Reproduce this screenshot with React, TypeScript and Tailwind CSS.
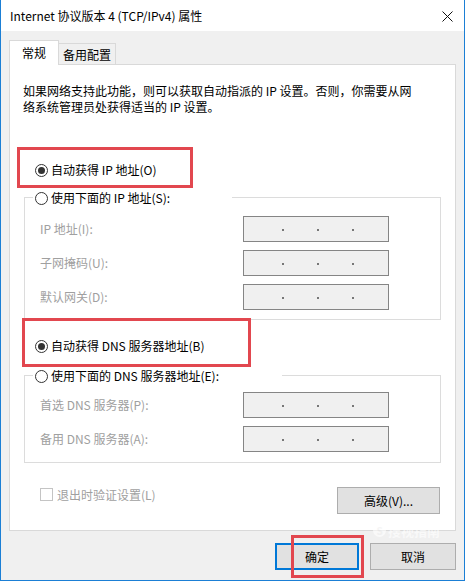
import type { ReactNode } from 'react';

const FONT = { fontFamily: '"Noto Sans CJK SC", "Noto Sans", sans-serif' };

function Radio({ checked }: { checked?: boolean }) {
  return (
    <span className="w-[13px] h-[13px] rounded-full border border-[#333] bg-white flex items-center justify-center shrink-0">
      {checked && <span className="w-[7px] h-[7px] rounded-full bg-[#333]" />}
    </span>
  );
}

function IpBox() {
  return (
    <div className="relative w-[146px] h-[26px] border border-[#858585] bg-[#f0f0f0]">
      <span className="absolute left-[38px] top-[12px] w-[2px] h-[2px] bg-[#777]" />
      <span className="absolute left-[73px] top-[12px] w-[2px] h-[2px] bg-[#777]" />
      <span className="absolute left-[108px] top-[12px] w-[2px] h-[2px] bg-[#777]" />
    </div>
  );
}

function Field({ label }: { label: string }) {
  return (
    <div className="grid grid-cols-[203px_146px] items-center">
      <span className="text-[12px] text-[#a0a0a0]">{label}</span>
      <IpBox />
    </div>
  );
}

function Group({
  legend,
  legendWidth,
  children,
}: {
  legend: string;
  legendWidth: string;
  children: ReactNode;
}) {
  return (
    <div className="ml-[14px] w-[417px] border border-[#dcdcdc]">
      <div className={`-mt-[8px] ml-[8px] h-[16px] bg-white flex items-center gap-[3px] pl-[2px] ${legendWidth}`}>
        <Radio />
        <span className="text-[12px] text-black leading-none">{legend}</span>
      </div>
      {children}
    </div>
  );
}

function RedBox({ className }: { className: string }) {
  return <div className={`absolute border-[3px] border-[#e2474f] pointer-events-none ${className}`} />;
}

export default function App() {
  return (
    <div
      style={FONT}
      className="relative w-[465px] h-[581px] bg-[#f0f0f0] border-x border-b border-[#1b7fd5] flex flex-col overflow-hidden"
    >
      {/* title bar */}
      <div className="h-[31px] bg-white flex items-center justify-between pl-[9px] pr-[11px] shrink-0">
        <span className="text-[12px] text-black">Internet 协议版本 4 (TCP/IPv4) 属性</span>
        <svg width="11" height="11" viewBox="0 0 11 11" className="mt-[1px]">
          <path d="M0.5 0.5 L10.5 10.5 M10.5 0.5 L0.5 10.5" stroke="#111" strokeWidth="1" />
        </svg>
      </div>

      <div className="pl-[8px] pr-[8px] flex flex-col">
        {/* tabs */}
        <div className="flex items-end pt-[9px] h-[33px]">
          <div className="w-[50px] h-[25px] bg-white border border-b-0 border-[#d9d9d9] flex justify-center pt-[3px] text-[12px] text-black relative z-10 -mb-[1px]">
            常规
          </div>
          <div className="w-[57px] h-[21px] bg-[#f0f0f0] border border-l-0 border-b-0 border-[#d9d9d9] flex justify-center pt-[2px] text-[12px] text-black">
            备用配置
          </div>
        </div>

        {/* panel */}
        <div className="relative h-[467px] w-[447px] bg-white border border-[#d9d9d9] flex flex-col">
          <p className="mt-[18px] ml-[13px] text-[12px] leading-[16px] text-black">
            如果网络支持此功能，则可以获取自动指派的 IP 设置。否则，你需要从网
            <br />
            络系统管理员处获得适当的 IP 设置。
          </p>

          <div className="mt-[47px] ml-[25px] h-[16px] flex items-center gap-[3px]">
            <Radio checked />
            <span className="text-[12px] text-black leading-none">自动获得 IP 地址(O)</span>
          </div>

          <div className="mt-[19px]">
            <Group legend="使用下面的 IP 地址(S):" legendWidth="w-[199px]">
              <div className="mt-[10px] mb-[9px] pl-[15px] flex flex-col gap-[8px]">
                <Field label="IP 地址(I):" />
                <Field label="子网掩码(U):" />
                <Field label="默认网关(D):" />
              </div>
            </Group>
          </div>

          <div className="mt-[18px] ml-[25px] h-[16px] flex items-center gap-[3px]">
            <Radio checked />
            <span className="text-[12px] text-black leading-none">自动获得 DNS 服务器地址(B)</span>
          </div>

          <div className="mt-[21px]">
            <Group legend="使用下面的 DNS 服务器地址(E):" legendWidth="w-[249px]">
              <div className="mt-[8px] mb-[10px] pl-[15px] flex flex-col gap-[8px]">
                <Field label="首选 DNS 服务器(P):" />
                <Field label="备用 DNS 服务器(A):" />
              </div>
            </Group>
          </div>

          <div className="mt-[24px] ml-[30px] mr-[15px] flex justify-between items-start">
            <div className="mt-[1px] flex items-center gap-[4px]">
              <span className="w-[13px] h-[13px] border border-[#c4c4c4] bg-white" />
              <span className="text-[12px] text-[#a0a0a0] leading-none">退出时验证设置(L)</span>
            </div>
            <button className="w-[103px] h-[27px] bg-[#e1e1e1] border border-[#adadad] text-[12px] text-black">
              高级(V)...
            </button>
          </div>

          <RedBox className="left-[7px] top-[82px] w-[176px] h-[41px]" />
          <RedBox className="left-[12px] top-[253px] w-[229px] h-[49px]" />
        </div>

        {/* dialog buttons */}
        <div className="mt-[12px] flex justify-end gap-[11px]">
          <button className="w-[84px] h-[27px] bg-[#e1e1e1] border-2 border-[#0078d7] text-[12px] text-black">
            确定
          </button>
          <button className="w-[86px] h-[27px] bg-[#e1e1e1] border border-[#adadad] text-[12px] text-black">
            取消
          </button>
        </div>
      </div>

      {/* annotation around OK button */}
      <div className="absolute left-[290px] top-[535px] w-[73px] h-[43px] border-[3px] border-[#e2474f]" />

      {/* faint watermark */}
      <div className="absolute left-[372px] top-[524px] flex items-center gap-[2px] opacity-60">
        <span className="w-[13px] h-[13px] rounded-full bg-white text-[#f0f0f0] text-[10px] font-bold leading-[13px] text-center">
          S
        </span>
        <span className="text-[13px] font-bold text-white leading-none">搜视指南</span>
      </div>
    </div>
  );
}
